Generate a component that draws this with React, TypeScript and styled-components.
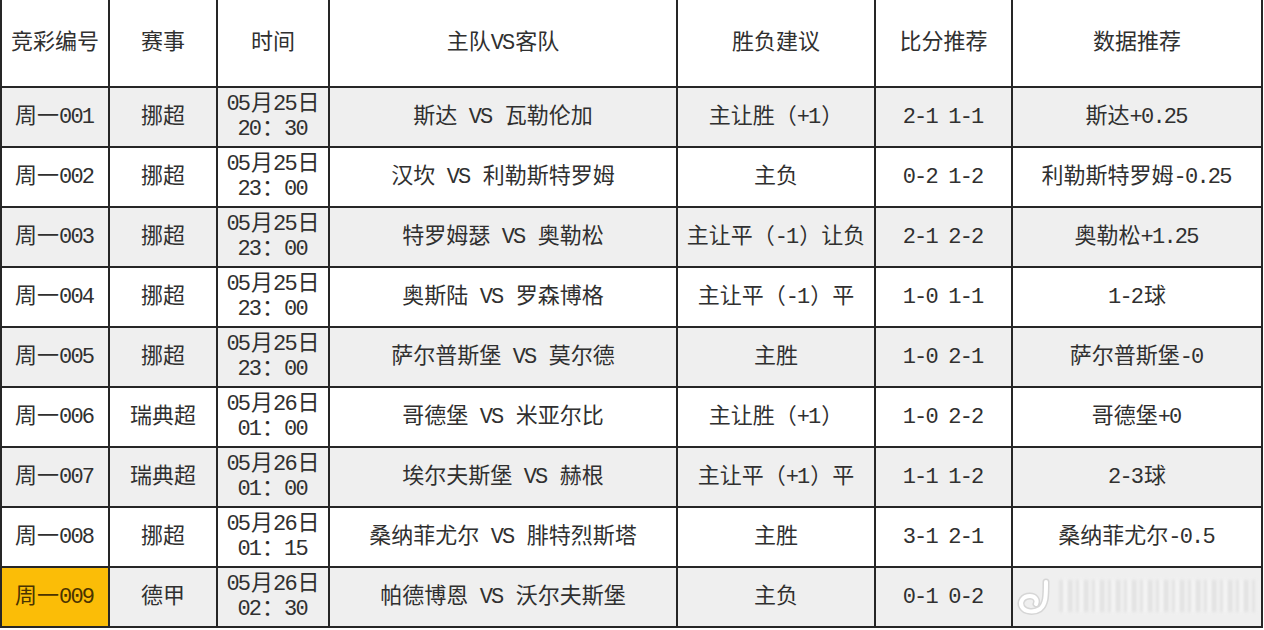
import React from "react";
import styled, { createGlobalStyle } from "styled-components";

const Global = createGlobalStyle`
  html, body { margin: 0; padding: 0; background: #fff; }
  body { font-family: "Liberation Mono", "Noto Sans CJK SC", monospace; }
`;

const Page = styled.div`
  position: relative;
  width: 1264px;
  height: 630px;
  overflow: hidden;
  background: #fff;
`;

const Grid = styled.div`
  display: grid;
  grid-template-columns: 106px 106px 110px 346px 196px 135px 248px;
  grid-template-rows: 86px repeat(9, 58px);
  gap: 2px;
  padding: 0 2px 2px 2px;
  background: #262626;
  width: max-content;
`;

const Cell = styled.div<{ $bg: string; $color?: string }>`
  display: flex;
  flex-direction: column;
  align-items: center;
  justify-content: center;
  background: ${(p) => p.$bg};
  color: ${(p) => p.$color || "#303030"};
  font-size: 22px;
  line-height: 25px;
  white-space: pre;
  text-align: center;
`;

const Line = styled.span`
  display: block;
`;

const Latin = styled.span`
  letter-spacing: -1.8px;
  margin-right: 1.8px;
`;

const Watermark = styled.div`
  position: absolute;
  left: 1016px;
  top: 574px;
  width: 240px;
  height: 44px;
  display: flex;
  align-items: center;
  gap: 4px;
  pointer-events: none;
`;

const Bars = styled.div`
  flex: 1;
  height: 32px;
  background: repeating-linear-gradient(
    90deg,
    rgba(185, 185, 185, 0.6) 0px,
    rgba(255, 255, 255, 0.95) 5px,
    rgba(200, 200, 200, 0.55) 10px,
    rgba(255, 255, 255, 0.95) 16px
  );
  filter: blur(1.5px);
  opacity: 0.85;
`;

type Row = [string, string, string, string, string, string, string, string];

const rows: Row[] = [
  ["周一001", "挪超", "05月25日", "20：30", "斯达 VS 瓦勒伦加", "主让胜（+1）", "2-1 1-1", "斯达+0.25"],
  ["周一002", "挪超", "05月25日", "23：00", "汉坎 VS 利勒斯特罗姆", "主负", "0-2 1-2", "利勒斯特罗姆-0.25"],
  ["周一003", "挪超", "05月25日", "23：00", "特罗姆瑟 VS 奥勒松", "主让平（-1）让负", "2-1 2-2", "奥勒松+1.25"],
  ["周一004", "挪超", "05月25日", "23：00", "奥斯陆 VS 罗森博格", "主让平（-1）平", "1-0 1-1", "1-2球"],
  ["周一005", "挪超", "05月25日", "23：00", "萨尔普斯堡 VS 莫尔德", "主胜", "1-0 2-1", "萨尔普斯堡-0"],
  ["周一006", "瑞典超", "05月26日", "01：00", "哥德堡 VS 米亚尔比", "主让胜（+1）", "1-0 2-2", "哥德堡+0"],
  ["周一007", "瑞典超", "05月26日", "01：00", "埃尔夫斯堡 VS 赫根", "主让平（+1）平", "1-1 1-2", "2-3球"],
  ["周一008", "挪超", "05月26日", "01：15", "桑纳菲尤尔 VS 腓特烈斯塔", "主胜", "3-1 2-1", "桑纳菲尤尔-0.5"],
  ["周一009", "德甲", "05月26日", "02：30", "帕德博恩 VS 沃尔夫斯堡", "主负", "0-1 0-2", ""],
];

const headers = ["竞彩编号", "赛事", "时间", "主队VS客队", "胜负建议", "比分推荐", "数据推荐"];

function Txt({ s }: { s: string }) {
  const parts = s.match(/[\x00-\x7f]+|[^\x00-\x7f]+/g) || [];
  return (
    <>
      {parts.map((p, i) =>
        /^[\x00-\x7f]+$/.test(p) ? <Latin key={i}>{p}</Latin> : <span key={i}>{p}</span>
      )}
    </>
  );
}

export default function App() {
  return (
    <Page>
      <Global />
      <Grid>
        {headers.map((h) => (
          <Cell key={h} $bg="#ffffff">
            <Line>
              <Txt s={h} />
            </Line>
          </Cell>
        ))}
        {rows.map((r, i) => {
          const bg = i % 2 === 0 ? "#efefef" : "#ffffff";
          const last = i === rows.length - 1;
          return (
            <React.Fragment key={r[0]}>
              <Cell $bg={last ? "#fbbd07" : bg} $color={last ? "#4a3300" : undefined}>
                <Line><Txt s={r[0]} /></Line>
              </Cell>
              <Cell $bg={bg}><Line><Txt s={r[1]} /></Line></Cell>
              <Cell $bg={bg}>
                <Line><Txt s={r[2]} /></Line>
                <Line><Txt s={r[3]} /></Line>
              </Cell>
              <Cell $bg={bg}><Line><Txt s={r[4]} /></Line></Cell>
              <Cell $bg={bg}><Line><Txt s={r[5]} /></Line></Cell>
              <Cell $bg={bg}><Line><Txt s={r[6]} /></Line></Cell>
              <Cell $bg={bg}><Line><Txt s={r[7]} /></Line></Cell>
            </React.Fragment>
          );
        })}
      </Grid>
      <Watermark>
        <svg width="40" height="40" viewBox="0 0 40 40">
          <path
            d="M30 6 C30 20 30 28 24 33 C18 37 9 36 6 31 C3 26 7 20 14 20 C19 20 22 24 20 28"
            fill="none"
            stroke="#bdbdbd"
            strokeWidth="7"
            strokeLinecap="round"
            opacity="0.5"
          />
          <path
            d="M30 6 C30 20 30 28 24 33 C18 37 9 36 6 31 C3 26 7 20 14 20 C19 20 22 24 20 28"
            fill="none"
            stroke="#ffffff"
            strokeWidth="4"
            strokeLinecap="round"
          />
        </svg>
        <Bars />
      </Watermark>
    </Page>
  );
}
